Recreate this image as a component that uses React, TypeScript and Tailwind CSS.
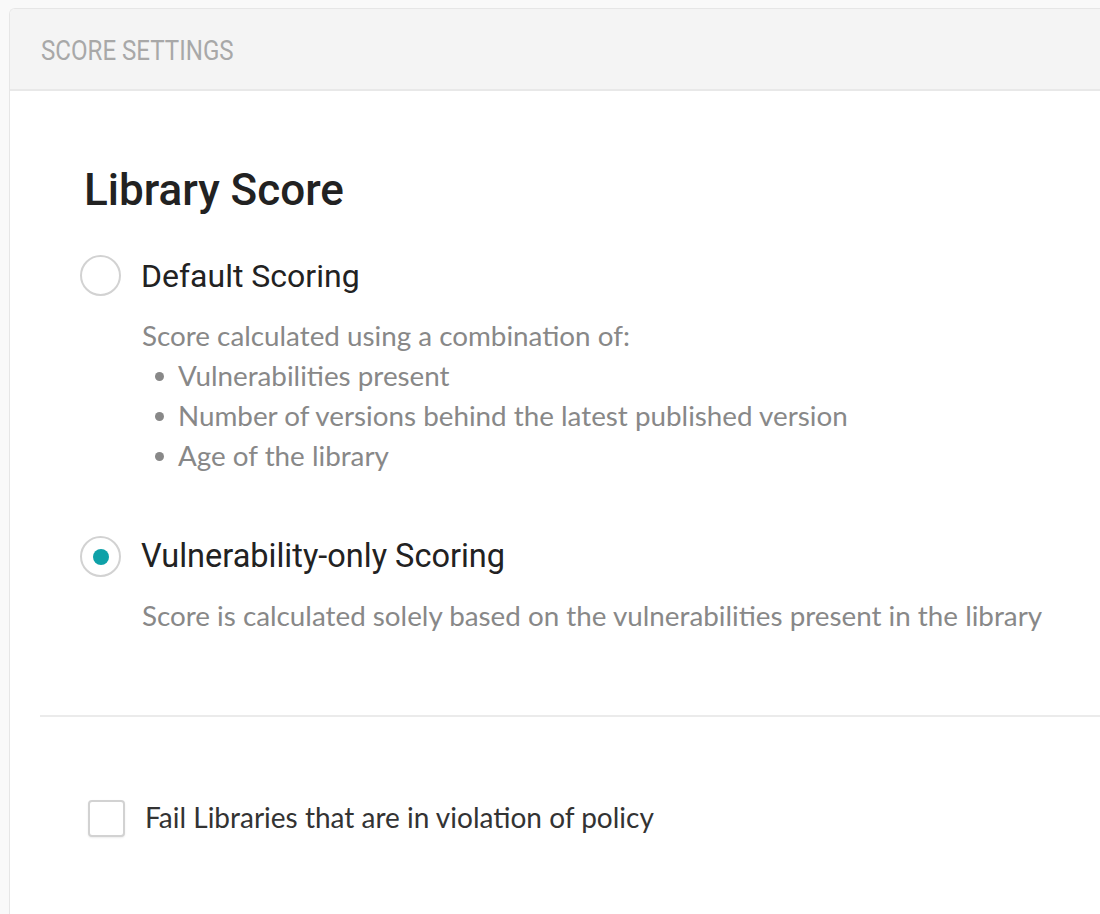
import React, { useState } from 'react';

const roboto = { fontFamily: 'Roboto, "Liberation Sans", sans-serif' };

const Radio = ({ checked }: { checked: boolean }) => (
  <span className="w-[41px] h-[41px] rounded-full border-2 border-[#d2d2d2] bg-white flex items-center justify-center shrink-0">
    {checked && <span className="w-[16px] h-[16px] rounded-full bg-[#0ea1a8]"></span>}
  </span>
);

const App = () => {
  const [mode, setMode] = useState<'default' | 'vuln'>('vuln');
  const [fail, setFail] = useState(false);

  return (
    <div className="min-h-screen bg-[#f9f9f9] pl-[9px] pt-[8px] font-['Lato',sans-serif]">
      <div className="bg-white border border-r-0 border-b-0 border-[#e6e6e6] rounded-tl-[6px] h-[906px] overflow-hidden">
        <div
          className="h-[82px] bg-[#f4f4f4] border-b-2 border-[#e8e8e8] flex items-center pl-[31px] pt-[3px]"
          style={roboto}
        >
          <span className="inline-block text-[28px] leading-none text-[#a8a8a8] uppercase scale-x-[0.86] origin-left">
            Score Settings
          </span>
        </div>

        <div className="pl-[30px] pt-[77px]">
          <div className="pl-[40px]">
            <h2 className="text-[44px] leading-none font-medium text-[#222] pl-[4px]" style={roboto}>
              Library Score
            </h2>

            <button className="flex items-center gap-[20px] h-[41px] mt-[43px] text-left" onClick={() => setMode('default')}>
              <Radio checked={mode === 'default'} />
              <span className="text-[32px] leading-none text-[#222]" style={roboto}>Default Scoring</span>
            </button>
            <div className="pl-[62px] mt-[20px] text-[27.8px] leading-[40px] text-[#888]">
              <p>Score calculated using a combination of:</p>
              <ul className="pl-[13px]">
                {['Vulnerabilities present', 'Number of versions behind the latest published version', 'Age of the library'].map(item => (
                  <li key={item} className="flex items-center gap-[14px]">
                    <span className="w-[9px] h-[9px] rounded-full bg-[#888]"></span>
                    {item}
                  </li>
                ))}
              </ul>
            </div>

            <button className="flex items-center gap-[20px] h-[41px] mt-[60px] text-left" onClick={() => setMode('vuln')}>
              <Radio checked={mode === 'vuln'} />
              <span className="text-[32.5px] leading-none text-[#222]" style={roboto}>Vulnerability-only Scoring</span>
            </button>
            <p className="pl-[62px] mt-[19px] text-[27.8px] leading-[40px] text-[#888]">
              Score is calculated solely based on the vulnerabilities present in the library
            </p>
          </div>

          <div className="mt-[79px] border-t-2 border-[#ebebeb]"></div>

          <label className="flex items-center gap-[20px] h-[37px] pl-[48px] mt-[83px] cursor-pointer">
            <span
              className="w-[37px] h-[37px] rounded-[4px] border-2 border-[#d2d2d2] bg-white shadow-[0_1px_2px_rgba(0,0,0,0.08)] flex items-center justify-center"
              onClick={() => setFail(!fail)}
            >
              {fail && <span className="w-[16px] h-[16px] bg-[#0ea1a8]"></span>}
            </span>
            <span className="text-[28px] leading-none text-[#333] pb-[3px]">Fail Libraries that are in violation of policy</span>
          </label>
        </div>
      </div>
    </div>
  );
};

export default App;
